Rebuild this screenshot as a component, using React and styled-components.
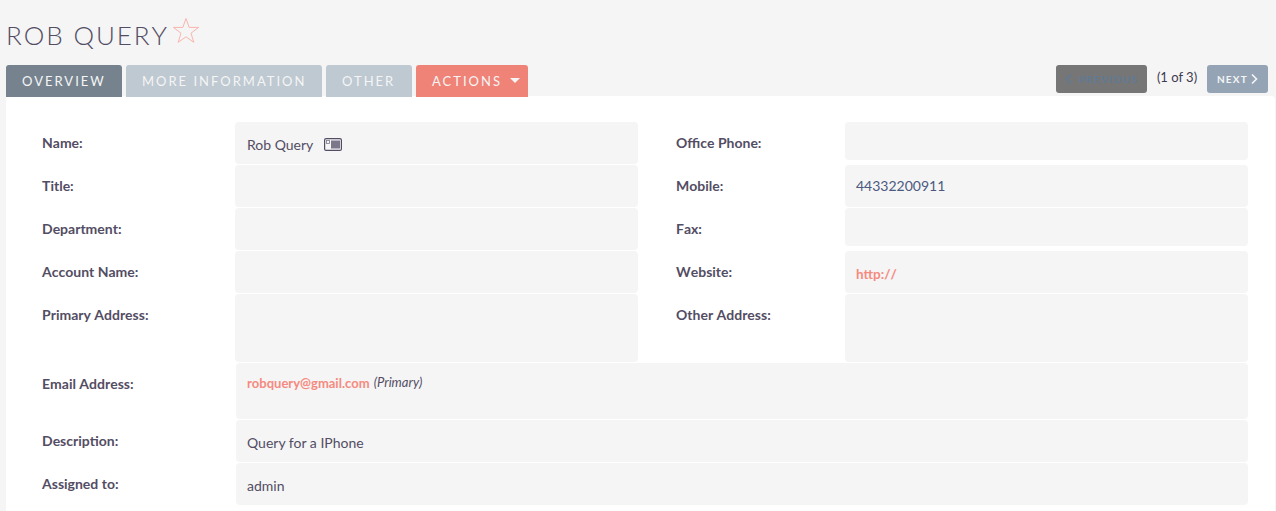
import React from 'react'
import styled, { createGlobalStyle } from 'styled-components'

const GlobalStyle = createGlobalStyle`
  html, body {
    margin: 0;
    background: #f5f5f5;
    font-family: Lato, "Open Sans", sans-serif;
    color: #534d64;
  }
`

const Page = styled.div`
  width: 1276px;
  height: 511px;
  overflow: hidden;
  box-sizing: border-box;
  padding: 16px 0 0 6px;
`

const TitleRow = styled.div`
  display: flex;
  align-items: flex-start;
  height: 49px;
`

const Title = styled.h2`
  margin: 5px 0 0;
  font-size: 26px;
  line-height: 28px;
  font-weight: 300;
  font-kerning: none;
  letter-spacing: 1.9px;
  color: #534d64;
`

const Star = styled.svg`
  width: 28px;
  height: 27px;
  margin: 1px 0 0 3px;
  fill: none;
  stroke: #f9b5ad;
  stroke-width: 1;
`

const NavRow = styled.div`
  display: flex;
  justify-content: space-between;
  height: 31px;
  position: relative;
  z-index: 1;
`

const Tabs = styled.div`
  display: flex;
  gap: 4px;
`

const Tab = styled.div`
  width: ${(p) => p.$w}px;
  height: 32px;
  box-sizing: border-box;
  padding: 0 0 1px 16px;
  display: flex;
  align-items: center;
  gap: 8px;
  border-radius: 3px 3px 0 0;
  font-size: 13px;
  letter-spacing: 2px;
  color: #f5f5f5;
  background: ${(p) => p.$bg};
`

const Caret = styled.span`
  width: 0;
  height: 0;
  border-left: 5px solid transparent;
  border-right: 5px solid transparent;
  border-top: 5px solid #f5f5f5;
`

const Pager = styled.div`
  display: flex;
  align-items: flex-start;
  margin-right: 8px;
`

const PageButton = styled.div`
  height: 28px;
  box-sizing: border-box;
  display: flex;
  align-items: center;
  justify-content: center;
  width: ${(p) => p.$w}px;
  gap: ${(p) => p.$gap}px;
  border-radius: 3px;
  font-size: 10px;
  font-weight: 700;
  letter-spacing: 1.25px;
  background: ${(p) => p.$bg};
  color: ${(p) => p.$fg};
`

const Chevron = styled.svg`
  width: 7px;
  height: 10px;
  fill: none;
  stroke: currentColor;
  stroke-width: 1.6;
`

const PageCount = styled.span`
  width: 60px;
  text-align: center;
  font-size: 13px;
  line-height: 25px;
  color: #3e3a50;
`

const Panel = styled.div`
  width: 1269px;
  height: 420px;
  box-sizing: border-box;
  padding: 26px 0 0;
  background: #fff;
  border-top-right-radius: 4px;
  display: flex;
  flex-direction: column;
  gap: 1px;
`

const Row = styled.div`
  display: flex;
  height: ${(p) => p.$h}px;
`

const Field = styled.div`
  display: flex;
  box-sizing: border-box;
  width: ${(p) => p.$w}px;
  padding-left: ${(p) => p.$left}px;
`

const Label = styled.div`
  width: ${(p) => p.$w}px;
  flex-shrink: 0;
  padding-top: 12px;
  font-size: 14px;
  line-height: 17px;
  font-weight: 700;
  font-kerning: none;
  color: #534d64;
`

const Value = styled.div`
  flex: 1;
  height: ${(p) => (p.$h ? `${p.$h}px` : 'auto')};
  box-sizing: border-box;
  padding: ${(p) => p.$top || 14}px 11px 0 ${(p) => p.$left || 12}px;
  background: #f5f5f5;
  border-radius: 4px;
  font-size: 14px;
  line-height: 17px;
  color: #534d64;
  display: flex;
  align-items: flex-start;
`

const Wide = styled(Value)`
  flex: none;
  width: 1012px;
  padding-left: 11px;
`

const Phone = styled.span`
  color: #4a5a80;
`

const Link = styled.a`
  color: #f58a80;
  font-weight: 700;
  font-kerning: none;
  font-size: ${(p) => p.$size}px;
  line-height: 18px;
`

const Primary = styled.em`
  margin-left: 4px;
  font-size: 13px;
`

const CardIcon = styled.svg`
  width: 18px;
  height: 13px;
  margin: 2px 0 0 11px;
`

const Left = ({ label, h, children }) => (
  <Field $w={632} $left={36}>
    <Label $w={193}>{label}</Label>
    <Value $h={h}>{children}</Value>
  </Field>
)

const Right = ({ label, h, top, children }) => (
  <Field $w={610} $left={38}>
    <Label $w={169}>{label}</Label>
    <Value $h={h} $top={top} $left={11}>{children}</Value>
  </Field>
)

const Full = ({ label, children, top }) => (
  <Row $h={top ? 56 : 42}>
    <Field $w={1242} $left={36}>
      <Label $w={194}>{label}</Label>
      <Wide $top={top}>{children}</Wide>
    </Field>
  </Row>
)

const App = () => (
  <Page>
    <GlobalStyle />
    <TitleRow>
      <Title>ROB QUERY</Title>
      <Star viewBox="0 0 28 27">
        <path d="M14 1.5 L17.2 10.4 L26.6 10.4 L19 16.2 L21.8 25.3 L14 19.8 L6.2 25.3 L9 16.2 L1.4 10.4 L10.8 10.4 Z" />
      </Star>
    </TitleRow>
    <NavRow>
      <Tabs>
        <Tab $w={116} $bg="#76838f">OVERVIEW</Tab>
        <Tab $w={196} $bg="#bec9d2">MORE INFORMATION</Tab>
        <Tab $w={86} $bg="#bec9d2">OTHER</Tab>
        <Tab $w={112} $bg="#f08377">ACTIONS<Caret /></Tab>
      </Tabs>
      <Pager>
        <PageButton $w={91} $gap={7} $bg="#767676" $fg="#5f7a96">
          <Chevron viewBox="0 0 7 10"><path d="M6 0.5 L1.5 5 L6 9.5" /></Chevron>
          PREVIOUS
        </PageButton>
        <PageCount>(1 of 3)</PageCount>
        <PageButton $w={61} $gap={3} $bg="#94a4b5" $fg="#f5f5f5">
          NEXT
          <Chevron viewBox="0 0 7 10"><path d="M1 0.5 L5.5 5 L1 9.5" /></Chevron>
        </PageButton>
      </Pager>
    </NavRow>
    <Panel>
      <Row $h={42}>
        <Left label="Name:">
          Rob Query
          <CardIcon viewBox="0 0 18 13">
            <rect x="0.6" y="0.6" width="16.8" height="11.8" rx="1.5" fill="#f5f5f5" stroke="#534d64" strokeWidth="1.2" />
            <rect x="7" y="2.5" width="9" height="8" fill="#7d7889" />
            <rect x="2.5" y="2.5" width="3" height="3" fill="none" stroke="#7d7889" strokeWidth="0.8" />
          </CardIcon>
        </Left>
        <Right label="Office Phone:" h={38} />
      </Row>
      <Row $h={42}>
        <Left label="Title:" />
        <Right label="Mobile:" top={12}><Phone>44332200911</Phone></Right>
      </Row>
      <Row $h={42}>
        <Left label="Department:" />
        <Right label="Fax:" h={38} />
      </Row>
      <Row $h={42}>
        <Left label="Account Name:" />
        <Right label="Website:"><Link $size={13.5}>http://</Link></Right>
      </Row>
      <Row $h={68}>
        <Left label="Primary Address:" />
        <Right label="Other Address:" />
      </Row>
      <Full label="Email Address:" top={11}>
        <Link $size={13}>robquery@gmail.com</Link>
        <Primary>(Primary)</Primary>
      </Full>
      <Full label="Description:">Query for a IPhone</Full>
      <Full label="Assigned to:">admin</Full>
    </Panel>
  </Page>
)

export default App
